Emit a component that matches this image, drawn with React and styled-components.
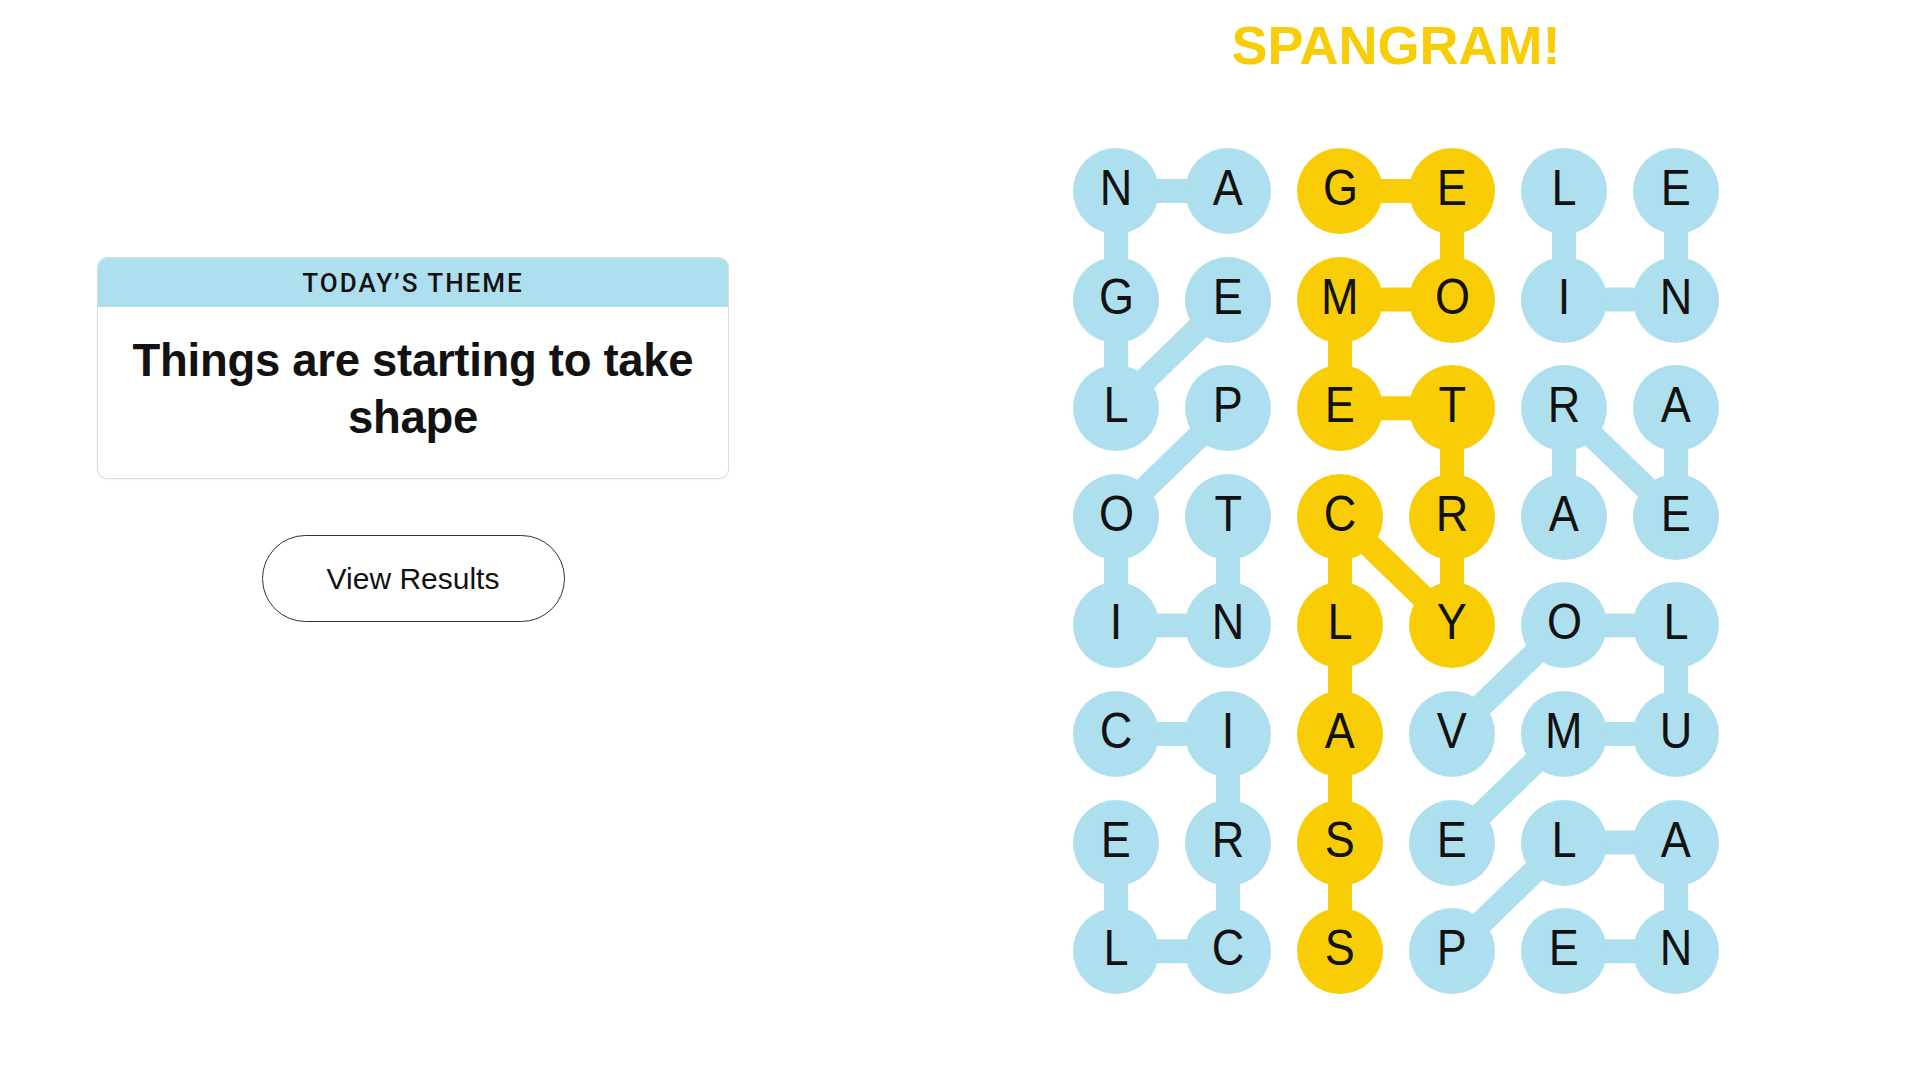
import React from "react";
import styled, { createGlobalStyle } from "styled-components";

const GlobalStyle = createGlobalStyle`
  html, body {
    margin: 0;
    padding: 0;
    background: #ffffff;
  }
  body {
    font-family: "Liberation Sans", Arial, sans-serif;
    color: #121212;
  }
`;

const BLUE = "#aedfee";
const YELLOW = "#f8cd05";

const CELL = 86;
const COL_STEP = 112;
const ROW_STEP = 108.6;

const LETTERS = [
  "NAGELE",
  "GEMOIN",
  "LPETRA",
  "OTCRAE",
  "INLYOL",
  "CIAVMU",
  "ERSELA",
  "LCSPEN",
];

// words as lists of [row, col]
const WORDS = [
  { spangram: false, path: [[0, 1], [0, 0], [1, 0], [2, 0], [1, 1]] }, // ANGLE
  { spangram: true, path: [[0, 2], [0, 3], [1, 3], [1, 2], [2, 2], [2, 3], [3, 3], [4, 3], [3, 2], [4, 2], [5, 2], [6, 2], [7, 2]] },
  { spangram: false, path: [[0, 4], [1, 4], [1, 5], [0, 5]] }, // LINE
  { spangram: false, path: [[3, 4], [2, 4], [3, 5], [2, 5]] }, // AREA
  { spangram: false, path: [[2, 1], [3, 0], [4, 0], [4, 1], [3, 1]] }, // POINT
  { spangram: false, path: [[5, 0], [5, 1], [6, 1], [7, 1], [7, 0], [6, 0]] }, // CIRCLE
  { spangram: false, path: [[5, 3], [4, 4], [4, 5], [5, 5], [5, 4], [6, 3]] }, // VOLUME
  { spangram: false, path: [[7, 3], [6, 4], [6, 5], [7, 5], [7, 4]] }, // PLANE
];

const isSpangram = (r, c) =>
  WORDS[1].path.some(([pr, pc]) => pr === r && pc === c);

const Page = styled.main`
  display: flex;
  align-items: flex-start;
  min-height: 1080px;
  padding-left: 97px;
`;

const ThemeColumn = styled.section`
  width: 632px;
  padding-top: 257px;
  display: flex;
  flex-direction: column;
  align-items: center;
  gap: 56px;
`;

const ThemeCard = styled.div`
  width: 100%;
  box-sizing: border-box;
  border: 1px solid #dcdcdc;
  border-radius: 10px;
  overflow: hidden;
  background: #fff;
  box-shadow: 0 1px 2px rgba(0, 0, 0, 0.04);
`;

const ThemeHeader = styled.div`
  height: 49px;
  background: ${BLUE};
  display: flex;
  align-items: center;
  justify-content: center;
  font-family: Roboto, "Liberation Sans", sans-serif;
  font-weight: 500;
  font-size: 26px;
  letter-spacing: 2px;
  color: #121212;
`;

const ThemeText = styled.h2`
  margin: 0;
  padding: 25px 20px 32px;
  text-align: center;
  font-family: "Liberation Sans", Arial, sans-serif;
  font-weight: 700;
  font-size: 45.5px;
  line-height: 57px;
  letter-spacing: -0.3px;
  color: #121212;
`;

const ResultsButton = styled.button`
  width: 303px;
  height: 87px;
  border: 1.5px solid #333;
  border-radius: 44px;
  background: #fff;
  font-family: "Liberation Sans", Arial, sans-serif;
  font-size: 30px;
  color: #121212;
  cursor: pointer;
`;

const BoardColumn = styled.section`
  margin-left: 344px;
  width: 646px;
  display: flex;
  flex-direction: column;
  align-items: center;
`;

const Title = styled.h1`
  margin: 19px 0 0;
  height: 53px;
  font-family: "Liberation Sans", Arial, sans-serif;
  font-weight: 700;
  font-size: 54px;
  line-height: 53px;
  color: ${YELLOW};
  letter-spacing: 0;
`;

const Board = styled.div`
  position: relative;
  margin-top: 76px;
  display: grid;
  grid-template-columns: repeat(6, ${CELL}px);
  column-gap: ${COL_STEP - CELL}px;
  row-gap: ${ROW_STEP - CELL}px;
`;

const Links = styled.svg`
  position: absolute;
  inset: 0;
  width: 100%;
  height: 100%;
  pointer-events: none;
`;

const Letter = styled.div`
  position: relative;
  width: ${CELL}px;
  height: ${CELL}px;
  box-sizing: border-box;
  padding-bottom: 6px;
  border-radius: 50%;
  background: ${(p) => (p.$spangram ? YELLOW : BLUE)};
  display: flex;
  align-items: center;
  justify-content: center;
  font-family: "Liberation Sans", Arial, sans-serif;
  font-size: 50px;
  line-height: 1;
  color: #121212;

  span {
    display: inline-block;
    transform: scaleX(0.9);
  }
`;

const center = ([r, c]) => [CELL / 2 + c * COL_STEP, CELL / 2 + r * ROW_STEP];

const App = () => {
  const w = CELL * 6 + (COL_STEP - CELL) * 5;
  const h = CELL * 8 + (ROW_STEP - CELL) * 7;
  return (
    <>
      <GlobalStyle />
      <Page>
        <ThemeColumn>
          <ThemeCard>
            <ThemeHeader>TODAY’S THEME</ThemeHeader>
            <ThemeText>Things are starting to take shape</ThemeText>
          </ThemeCard>
          <ResultsButton>View Results</ResultsButton>
        </ThemeColumn>

        <BoardColumn>
          <Title>SPANGRAM!</Title>
          <Board>
            <Links viewBox={`0 0 ${w} ${h}`}>
              {WORDS.map((word, i) => (
                <polyline
                  key={i}
                  points={word.path.map((p) => center(p).join(",")).join(" ")}
                  fill="none"
                  stroke={word.spangram ? YELLOW : BLUE}
                  strokeWidth="24"
                  strokeLinejoin="round"
                />
              ))}
            </Links>
            {LETTERS.map((row, r) =>
              row.split("").map((ch, c) => (
                <Letter key={`${r}-${c}`} $spangram={isSpangram(r, c)}>
                  <span>{ch}</span>
                </Letter>
              ))
            )}
          </Board>
        </BoardColumn>
      </Page>
    </>
  );
};

export default App;
